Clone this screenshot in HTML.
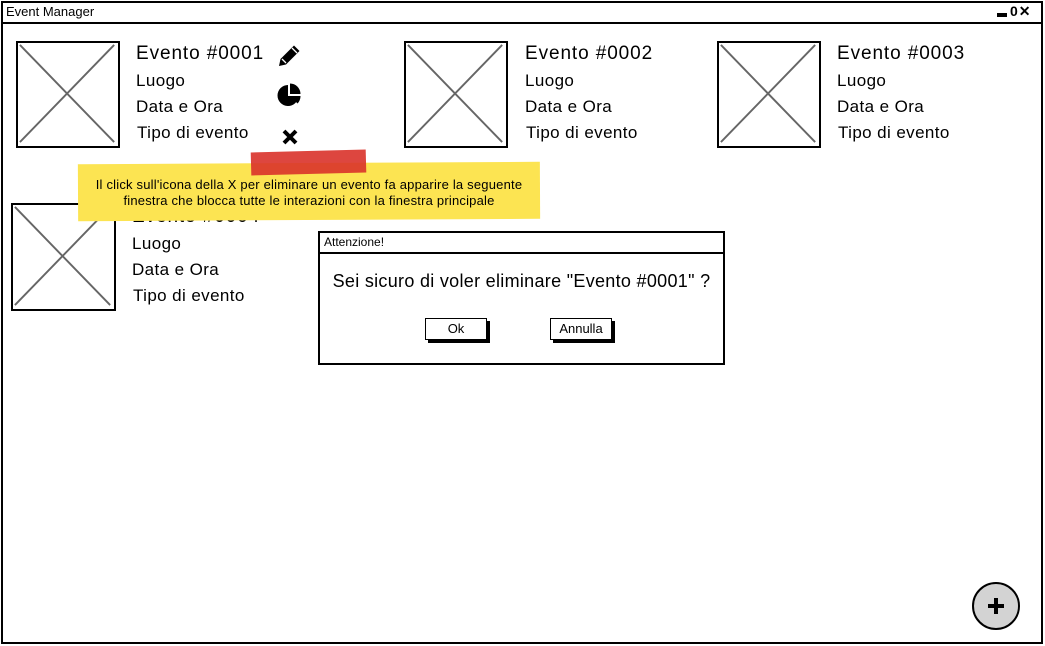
<!DOCTYPE html>
<html><head><meta charset="utf-8"><style>
*{margin:0;padding:0;box-sizing:border-box}
body{width:1045px;height:646px;background:#fff;position:relative;overflow:hidden;font-family:"Liberation Sans",sans-serif;color:#000}
.a{position:absolute}
.win{left:1px;top:1px;width:1042px;height:643px;border:2px solid #000}
.tb{left:1px;top:1px;width:1042px;height:23px;border-bottom:2px solid #000}
.ph{position:absolute;border:2px solid #000;background:#fff}
.t{position:absolute;font-size:17px;white-space:nowrap;letter-spacing:0.4px}
.h{font-size:19px;letter-spacing:0.9px}
.btn{position:absolute;border:1.5px solid #000;background:#fff;font-size:13px;text-align:center;line-height:20px;box-shadow:3px 3px 0 #000}
</style></head><body>
<div class="a win"></div>
<div class="a tb"></div>
<div class="t" style="left:6px;top:4px;font-size:13px;letter-spacing:0">Event Manager</div>
<div class="a" style="left:997px;top:13px;width:10px;height:4px;background:#000"></div>
<div class="t" style="left:1010px;top:3px;font-size:14px;font-weight:bold;letter-spacing:1px">0✕</div>

<svg class="ph" style="left:16px;top:41px" width="104" height="107" viewBox="0 0 104 107"><path d="M2 2L100 103M100 2L2 103" stroke="#666" stroke-width="2"/></svg>
<svg class="ph" style="left:404px;top:41px" width="104" height="107" viewBox="0 0 104 107"><path d="M2 2L100 103M100 2L2 103" stroke="#666" stroke-width="2"/></svg>
<svg class="ph" style="left:717px;top:41px" width="104" height="107" viewBox="0 0 104 107"><path d="M2 2L100 103M100 2L2 103" stroke="#666" stroke-width="2"/></svg>
<svg class="ph" style="left:11px;top:203px" width="105" height="108" viewBox="0 0 105 108"><path d="M2 2L101 104M101 2L2 104" stroke="#666" stroke-width="2"/></svg>

<div class="t h" style="left:136px;top:43px">Evento #0001</div>
<div class="t" style="left:136px;top:71px">Luogo</div>
<div class="t" style="left:136px;top:97px">Data e Ora</div>
<div class="t" style="left:137px;top:123px">Tipo di evento</div>

<div class="t h" style="left:525px;top:43px">Evento #0002</div>
<div class="t" style="left:525px;top:71px">Luogo</div>
<div class="t" style="left:525px;top:97px">Data e Ora</div>
<div class="t" style="left:526px;top:123px">Tipo di evento</div>

<div class="t h" style="left:837px;top:43px">Evento #0003</div>
<div class="t" style="left:837px;top:71px">Luogo</div>
<div class="t" style="left:837px;top:97px">Data e Ora</div>
<div class="t" style="left:838px;top:123px">Tipo di evento</div>

<div class="t h" style="left:132px;top:206px">Evento #0004</div>
<div class="t" style="left:132px;top:234px">Luogo</div>
<div class="t" style="left:132px;top:260px">Data e Ora</div>
<div class="t" style="left:133px;top:286px">Tipo di evento</div>

<svg class="a" style="left:278px;top:43px" width="24" height="24" viewBox="0 0 24 24"><path d="M1 23L2.5 16L16 2.5L21.5 8L8 21.5Z" fill="#000"/><path d="M4 16L8 20M14 5L19 10" stroke="#fff" stroke-width="1.3"/></svg>
<svg class="a" style="left:277px;top:82px" width="26" height="26" viewBox="0 0 26 26"><path d="M11 3A10.5 10.5 0 1 0 21.5 14H11Z" fill="#000"/><path d="M13 1.5A10.5 10.5 0 0 1 23.5 12H13Z" fill="#000"/><path d="M13 14L20.5 21.5A10.5 10.5 0 0 0 23.5 14Z" fill="#000"/></svg>
<svg class="a" style="left:281px;top:128px" width="18" height="18" viewBox="0 0 18 18"><path d="M3 3L15 15M15 3L3 15" stroke="#000" stroke-width="4"/></svg>

<div class="a" style="left:78px;top:163px;width:462px;height:57px;background:#fce452;transform:rotate(-0.3deg)"></div>
<div class="a" style="left:251px;top:151px;width:115px;height:23px;background:#d9322a;opacity:.9;transform:rotate(-1.5deg)"></div>
<div class="t" style="left:78px;top:177px;width:462px;text-align:center;font-size:13px;letter-spacing:0.2px;line-height:16px;white-space:normal">Il click sull'icona della X per eliminare un evento fa apparire la seguente<br>finestra che blocca tutte le interazioni con la finestra principale</div>

<div class="a" style="left:318px;top:231px;width:407px;height:134px;border:2px solid #000;background:#fff"></div>
<div class="a" style="left:318px;top:231px;width:407px;height:23px;border:2px solid #000"></div>
<div class="t" style="left:324px;top:235px;font-size:12px;letter-spacing:0">Attenzione!</div>
<div class="t" style="left:318px;top:271px;width:407px;text-align:center;font-size:18px;letter-spacing:0.3px">Sei sicuro di voler eliminare "Evento #0001" ?</div>
<div class="btn" style="left:425px;top:318px;width:62px;height:22px">Ok</div>
<div class="btn" style="left:550px;top:318px;width:62px;height:22px">Annulla</div>

<div class="a" style="left:972px;top:582px;width:48px;height:48px;border-radius:50%;background:#d3d3d3;border:2px solid #000"></div>
<svg class="a" style="left:986px;top:596px" width="20" height="20" viewBox="0 0 20 20"><path d="M10 2V18M2 10H18" stroke="#000" stroke-width="4"/></svg>
</body></html>
